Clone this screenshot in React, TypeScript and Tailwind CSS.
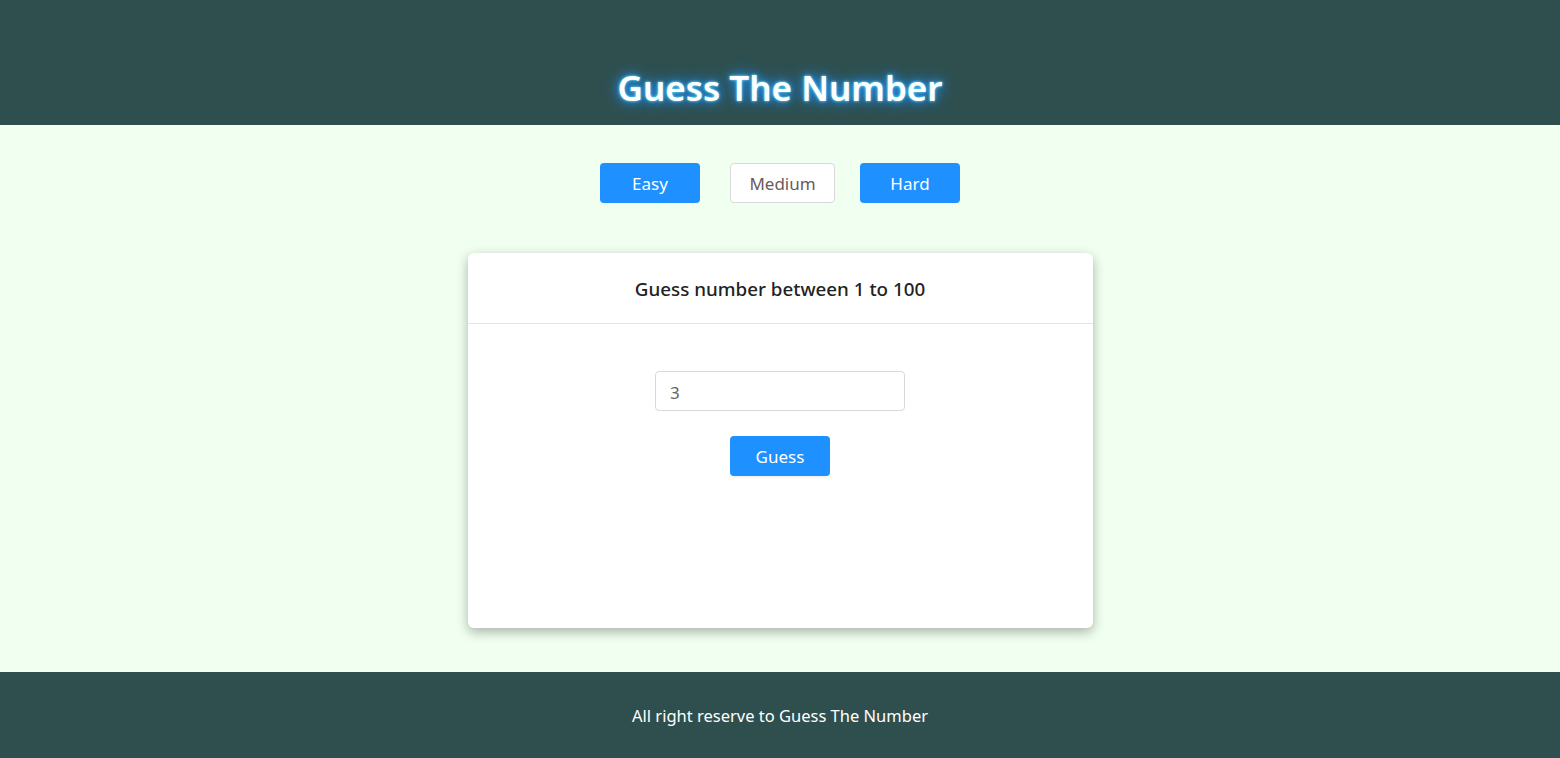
import React from "react";

export default function App() {
  return (
    <div
      className="w-full min-h-[758px] flex flex-col bg-[#f0fff0]"
      style={{ fontFamily: '"Noto Sans", "Open Sans", sans-serif' }}
    >
      <header className="h-[125px] bg-[#2f4f4f] flex items-end justify-center pb-[13px]">
        <h1 className="text-[35px] font-semibold text-white leading-[48px] [text-shadow:0_0_3px_#7fffff,0_0_8px_#1e90ff,0_0_16px_#1e90ff]">
          Guess The Number
        </h1>
      </header>
      <main className="flex-1 flex flex-col items-center">
        <div className="flex items-center mt-[38px] gap-[30px]">
          <button className="w-[100px] h-[40px] rounded-[4px] bg-[#1e90ff] text-white text-[17px] pt-[1px]">Easy</button>
          <button className="w-[105px] h-[40px] rounded-[4px] bg-white border border-[#d9d9d9] text-[#6b5b5b] text-[17px] -mr-[5px] pt-[1px]">Medium</button>
          <button className="w-[100px] h-[40px] rounded-[4px] bg-[#1e90ff] text-white text-[17px] pt-[1px]">Hard</button>
        </div>
        <div className="mt-[50px] w-[625px] h-[375px] bg-white rounded-[6px] shadow-[0_4px_12px_rgba(0,0,0,0.3)] flex flex-col">
          <div className="h-[71px] border-b border-[#e5e5e5] flex items-center justify-center">
            <span className="text-[18.8px] font-medium text-[#222] pt-[2px]">Guess number between 1 to 100</span>
          </div>
          <div className="flex flex-col items-center pt-[47px]">
            <input
              defaultValue="3"
              className="w-[250px] h-[40px] rounded-[4px] border border-[#d9d9d9] px-[14px] pt-[2px] text-[17px] text-[#666] outline-none"
            />
            <button className="mt-[25px] w-[100px] h-[40px] rounded-[4px] bg-[#1e90ff] text-white text-[17px] pt-[1px] shadow-[0_2px_2px_rgba(0,0,0,0.05)]">
              Guess
            </button>
          </div>
        </div>
        <div className="h-[44px]" />
      </main>
      <footer className="h-[86px] bg-[#2f4f4f] flex items-center justify-center">
        <span className="text-[16.5px] text-white pt-[2px]">All right reserve to Guess The Number</span>
      </footer>
    </div>
  );
}
